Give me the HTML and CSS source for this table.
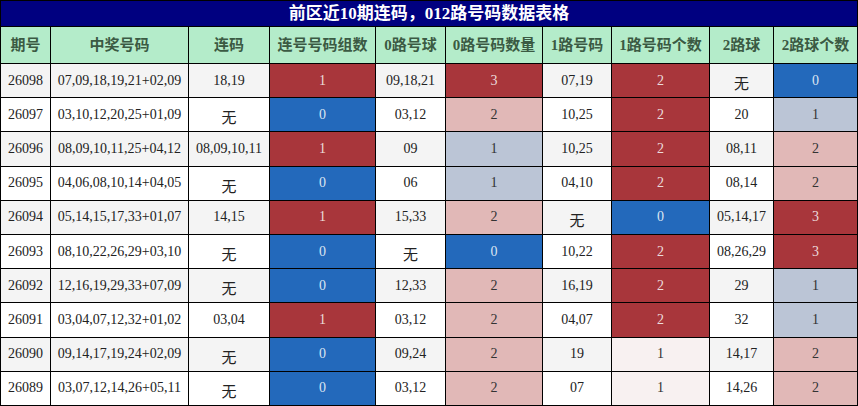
FILE: index.html
```html
<!DOCTYPE html>
<html lang="zh">
<head>
<meta charset="utf-8">
<link rel="stylesheet" href="styles.css">
</head>
<body>
<table class="grid">
<colgroup>
<col class="c1"><col class="c2"><col class="c3"><col class="c4"><col class="c5"><col class="c6"><col class="c7"><col class="c8"><col class="c9"><col class="c10">
</colgroup>
<thead>
<tr class="title"><th colspan="10">前区近10期连码，012路号码数据表格</th></tr>
<tr class="head"><th>期号</th><th>中奖号码</th><th>连码</th><th>连号号码组数</th><th>0路号球</th><th>0路号码数量</th><th>1路号码</th><th>1路号码个数</th><th>2路球</th><th>2路球个数</th></tr>
</thead>
<tbody>
<tr class="odd"><td>26098</td><td>07,09,18,19,21+02,09</td><td>18,19</td><td class="red">1</td><td>09,18,21</td><td class="red">3</td><td>07,19</td><td class="red">2</td><td class="cn">无</td><td class="blue">0</td></tr>
<tr><td>26097</td><td>03,10,12,20,25+01,09</td><td class="cn">无</td><td class="blue">0</td><td>03,12</td><td class="pink">2</td><td>10,25</td><td class="red">2</td><td>20</td><td class="grey">1</td></tr>
<tr class="odd"><td>26096</td><td>08,09,10,11,25+04,12</td><td>08,09,10,11</td><td class="red">1</td><td>09</td><td class="grey">1</td><td>10,25</td><td class="red">2</td><td>08,11</td><td class="pink">2</td></tr>
<tr><td>26095</td><td>04,06,08,10,14+04,05</td><td class="cn">无</td><td class="blue">0</td><td>06</td><td class="grey">1</td><td>04,10</td><td class="red">2</td><td>08,14</td><td class="pink">2</td></tr>
<tr class="odd"><td>26094</td><td>05,14,15,17,33+01,07</td><td>14,15</td><td class="red">1</td><td>15,33</td><td class="pink">2</td><td class="cn">无</td><td class="blue">0</td><td>05,14,17</td><td class="red">3</td></tr>
<tr><td>26093</td><td>08,10,22,26,29+03,10</td><td class="cn">无</td><td class="blue">0</td><td class="cn">无</td><td class="blue">0</td><td>10,22</td><td class="red">2</td><td>08,26,29</td><td class="red">3</td></tr>
<tr class="odd"><td>26092</td><td>12,16,19,29,33+07,09</td><td class="cn">无</td><td class="blue">0</td><td>12,33</td><td class="pink">2</td><td>16,19</td><td class="red">2</td><td>29</td><td class="grey">1</td></tr>
<tr><td>26091</td><td>03,04,07,12,32+01,02</td><td>03,04</td><td class="red">1</td><td>03,12</td><td class="pink">2</td><td>04,07</td><td class="red">2</td><td>32</td><td class="grey">1</td></tr>
<tr class="odd"><td>26090</td><td>09,14,17,19,24+02,09</td><td class="cn">无</td><td class="blue">0</td><td>09,24</td><td class="pink">2</td><td>19</td><td class="pale">1</td><td>14,17</td><td class="pink">2</td></tr>
<tr><td>26089</td><td>03,07,12,14,26+05,11</td><td class="cn">无</td><td class="blue">0</td><td>03,12</td><td class="pink">2</td><td>07</td><td class="pale">1</td><td>14,26</td><td class="pink">2</td></tr>
</tbody>
</table>
</body>
</html>
```
FILE: styles.css
```css
html, body {
  margin: 0;
  padding: 0;
  background: #ffffff;
}
.grid {
  border-collapse: collapse;
  table-layout: fixed;
  width: 858px;
  font-family: "Liberation Serif", "Noto Sans CJK SC", serif;
  font-size: 14px;
  line-height: 18px;
  color: #222;
}
.c1 { width: 50px; }
.c2 { width: 138px; }
.c3 { width: 81px; }
.c4 { width: 106px; }
.c5 { width: 70px; }
.c6 { width: 97px; }
.c7 { width: 69px; }
.c8 { width: 98px; }
.c9 { width: 64px; }
.c10 { width: 84px; }
.grid th, .grid td {
  border: 1px solid #000;
  padding: 0;
  text-align: center;
  white-space: nowrap;
  overflow: hidden;
}
.title { height: 26px; }
.title th {
  background: #000080;
  color: #fff;
  font-size: 17px;
  font-weight: bold;
}
.head { height: 37px; }
.head th {
  background: #b4ecca;
  color: #3b5a43;
  font-size: 15px;
  font-weight: bold;
}
.grid tbody tr { height: 34.2px; }
.odd td { background: #f4f4f4; }
.grid td.cn { font-family: "Noto Sans CJK SC", sans-serif; font-size: 15px; line-height: 18px; padding-top: 5px; }
.grid td.red { background: #a8363b; color: #ecdcdc; }
.grid td.blue { background: #2369bb; color: #dce6f2; }
.grid td.pink { background: #e1b8b7; color: #333; }
.grid td.grey { background: #bbc5d6; color: #333; }
.grid td.pale { background: #f8f1f1; color: #333; }
```
